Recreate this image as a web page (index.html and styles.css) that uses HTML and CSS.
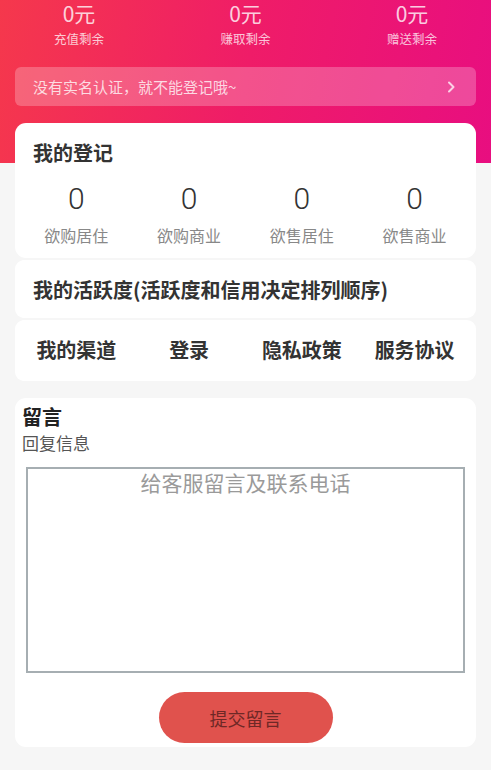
FILE: index.html
```html
<!DOCTYPE html>
<html lang="zh-CN">
<head>
<meta charset="utf-8">
<title>我的</title>
<link rel="stylesheet" href="styles.css">
</head>
<body>
<div class="page">
  <div class="stats">
    <div class="stat"><div class="stat-value">0元</div><div class="stat-label">充值剩余</div></div>
    <div class="stat"><div class="stat-value">0元</div><div class="stat-label">赚取剩余</div></div>
    <div class="stat"><div class="stat-value">0元</div><div class="stat-label">赠送剩余</div></div>
  </div>
  <div class="banner">
    <span class="banner-text">没有实名认证，就不能登记哦~</span>
    <svg class="chevron" width="8" height="12" viewBox="0 0 8 12"><path d="M2 1.5 L6.5 6 L2 10.5" fill="none" stroke="rgba(255,255,255,0.75)" stroke-width="2" stroke-linecap="round" stroke-linejoin="round"/></svg>
  </div>

  <div class="card card-reg">
    <div class="card-title">我的登记</div>
    <div class="grid4">
      <div class="cell"><div class="num">0</div><div class="cell-label">欲购居住</div></div>
      <div class="cell"><div class="num">0</div><div class="cell-label">欲购商业</div></div>
      <div class="cell"><div class="num">0</div><div class="cell-label">欲售居住</div></div>
      <div class="cell"><div class="num">0</div><div class="cell-label">欲售商业</div></div>
    </div>
  </div>

  <div class="card card-active">
    <div class="card-title">我的活跃度(活跃度和信用决定排列顺序)</div>
  </div>

  <div class="card card-links">
    <div class="grid4">
      <div class="link">我的渠道</div>
      <div class="link">登录</div>
      <div class="link">隐私政策</div>
      <div class="link">服务协议</div>
    </div>
  </div>

  <div class="card card-msg">
    <div class="msg-title">留言</div>
    <div class="msg-sub">回复信息</div>
    <textarea class="msg-input" placeholder="给客服留言及联系电话"></textarea>
    <div class="btn-row"><button class="submit">提交留言</button></div>
  </div>
</div>
</body>
</html>
```

FILE: styles.css
```css
* { box-sizing: border-box; }
html, body { margin: 0; padding: 0; }
body {
  background: #f6f6f6;
  font-family: "Noto Sans CJK SC", "Noto Sans", sans-serif;
  color: #333;
}
.page {
  width: 491px;
  min-height: 770px;
  padding: 0 15px 20px;
  background-image: linear-gradient(100deg, #f5384c 0%, #ef1c68 50%, #e80e80 100%);
  background-size: 100% 163px;
  background-repeat: no-repeat;
}
.stats {
  display: flex;
  justify-content: space-between;
  padding: 2px 38px 0;
}
.stat { display: flex; flex-direction: column; align-items: center; width: 52px; }
.stat-value {
  font-size: 21px;
  line-height: 22px;
  color: rgba(255,255,255,0.8);
  font-family: "Noto Sans CJK SC", sans-serif;
}
.stat-label {
  font-size: 12.5px;
  line-height: 14px;
  margin-top: 8px;
  color: rgba(255,255,255,0.75);
  white-space: nowrap;
}
.banner {
  margin-top: 21px;
  height: 39px;
  border-radius: 6px;
  background: rgba(255,255,255,0.24);
  display: flex;
  align-items: center;
  justify-content: space-between;
  padding: 0 21px 0 18px;
}
.banner-text {
  font-size: 15px;
  color: rgba(255,255,255,0.78);
}
.chevron { display: block; }

.card {
  background: #fff;
  border-radius: 9px;
}
.card-reg {
  margin-top: 17px;
  padding: 16px 5px 12px;
  border-radius: 11px;
}
.card-title {
  font-size: 20px;
  line-height: 28px;
  font-weight: bold;
  color: #333;
  padding-left: 13px;
}
.grid4 {
  display: grid;
  grid-template-columns: repeat(4, 1fr);
}
.card-reg .grid4 { margin-top: 14px; }
.cell { display: flex; flex-direction: column; align-items: center; }
.num {
  font-family: Roboto, "Noto Sans", sans-serif;
  font-weight: 300;
  font-size: 30px;
  line-height: 36px;
  color: #333;
}
.cell-label {
  margin-top: 7px;
  font-size: 16px;
  line-height: 22px;
  color: #888;
}
.card-active {
  margin-top: 2px;
  padding: 16px 5px 14px;
}
.card-active .card-title { font-weight: 600; }
.card-links {
  margin-top: 2px;
  padding: 16px 5px 17px;
}
.link {
  text-align: center;
  font-size: 20px;
  line-height: 28px;
  font-weight: bold;
  color: #333;
}
.card-msg {
  margin-top: 17px;
  padding: 6px 7px 4px;
  border-radius: 11px;
}
.msg-title {
  font-size: 20px;
  line-height: 26px;
  font-weight: bold;
  color: #222;
}
.msg-sub {
  font-size: 17px;
  line-height: 22px;
  color: #555;
  margin-top: 2px;
}
.msg-input {
  display: block;
  width: calc(100% - 8px);
  margin: 13px 4px 0;
  height: 206px;
  border: 2px solid #a6aeb2;
  border-radius: 0;
  padding: 0 4px;
  font-family: "Noto Sans CJK SC", sans-serif;
  font-size: 21px;
  line-height: 26px;
  text-align: center;
  color: #333;
  resize: none;
  outline: none;
  background: #fff;
}
.msg-input::placeholder { color: #9a9a9a; }
.btn-row {
  display: flex;
  justify-content: center;
  margin-top: 19px;
}
.submit {
  width: 174px;
  height: 51px;
  border: none;
  border-radius: 26px;
  background: #e0524d;
  color: #6e2826;
  font-family: "Noto Sans CJK SC", sans-serif;
  font-size: 18px;
  padding: 0;
}
```
